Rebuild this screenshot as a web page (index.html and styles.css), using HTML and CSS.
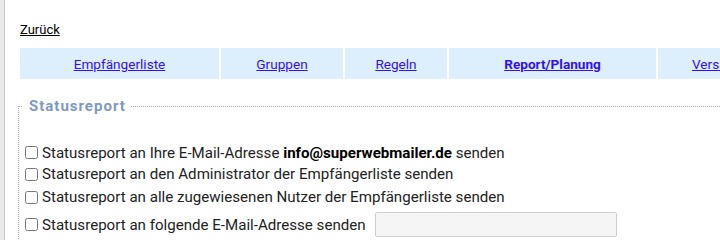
FILE: index.html
```html
<!DOCTYPE html>
<html>
<head>
<meta charset="utf-8">
<link rel="stylesheet" href="styles.css">
</head>
<body>
<div class="frame">
  <div class="page">
    <div class="back"><a href="#" class="back-link">Zurück</a></div>
    <div class="tabs">
      <div class="tab tab-1"><a href="#">Empfängerliste</a></div>
      <div class="tab tab-2"><a href="#">Gruppen</a></div>
      <div class="tab tab-3"><a href="#">Regeln</a></div>
      <div class="tab tab-4"><a href="#" class="active">Report/Planung</a></div>
      <div class="tab tab-5"><a href="#">Versand</a></div>
    </div>
    <fieldset class="report">
      <legend>Statusreport</legend>
      <div class="rows">
        <label class="row row-1"><input type="checkbox"><span>Statusreport an Ihre E-Mail-Adresse <b>info@superwebmailer.de</b> senden</span></label>
        <label class="row row-2"><input type="checkbox"><span>Statusreport an den Administrator der Empfängerliste senden</span></label>
        <label class="row row-3"><input type="checkbox"><span>Statusreport an alle zugewiesenen Nutzer der Empfängerliste senden</span></label>
        <label class="row row-4"><input type="checkbox"><span>Statusreport an folgende E-Mail-Adresse senden</span><input type="text" class="mail"></label>
      </div>
    </fieldset>
  </div>
</div>
</body>
</html>
```
FILE: styles.css
```css
html, body {
  margin: 0;
  padding: 0;
  height: 100%;
  overflow: hidden;
  background: #fff;
}
body {
  font-family: Roboto, "Liberation Sans", Arial, sans-serif;
  font-size: 15.1px;
  color: #222;
}
.frame {
  height: 100%;
  background: #ebebeb;
  padding-left: 4px;
}
.page {
  height: 100%;
  background: #fff;
  border-left: 1px solid #cacaca;
  padding-left: 13px;
  width: 1000px;
}
.back {
  padding-top: 22px;
  height: 16px;
  margin-left: 2px;
  font-size: 13px;
  line-height: 16px;
}
.back-link {
  color: #000;
}
.tabs {
  display: flex;
  gap: 2px;
  margin-top: 10px;
  margin-left: 2px;
}
.tab {
  background: #ddeefc;
  height: 31px;
  display: flex;
  align-items: center;
  justify-content: center;
  font-size: 13.6px;
}
.tab a {
  color: #3311ee;
}
.tab a.active {
  font-weight: bold;
}
.tab-1 { width: 199px; }
.tab-2 { width: 122px; }
.tab-3 { width: 102px; }
.tab-4 { width: 207px; }
.tab-5 { width: 110px; justify-content: flex-start; padding-left: 34px; }
.report {
  margin: 18px 0 0 0;
  border: 1px dotted #aaa;
  padding: 0 0 10px 2px;
  width: 900px;
}
.report legend {
  margin-left: 2px;
  padding: 0 5px 0 6px;
  font-weight: bold;
  font-size: 15px;
  letter-spacing: 1px;
  color: #8098c6;
  line-height: 18px;
}
.rows {
  padding-top: 27px;
}
.row {
  display: flex;
  align-items: center;
}
.row input[type="checkbox"] {
  margin: 0 4px 0 4px;
  width: 13px;
  height: 13px;
}
.row-1 { height: 21px; }
.row-2 { height: 22px; }
.row-3 { height: 24px; }
.row-4 { height: 31px; }
.row b {
  color: #000;
}
.mail {
  margin: 0 0 0 9px;
  width: 240px;
  height: 23px;
  box-sizing: content-box;
  padding: 0;
  border: 1px solid #cfcfcf;
  border-radius: 2px;
  background: #f5f5f5;
}
```
